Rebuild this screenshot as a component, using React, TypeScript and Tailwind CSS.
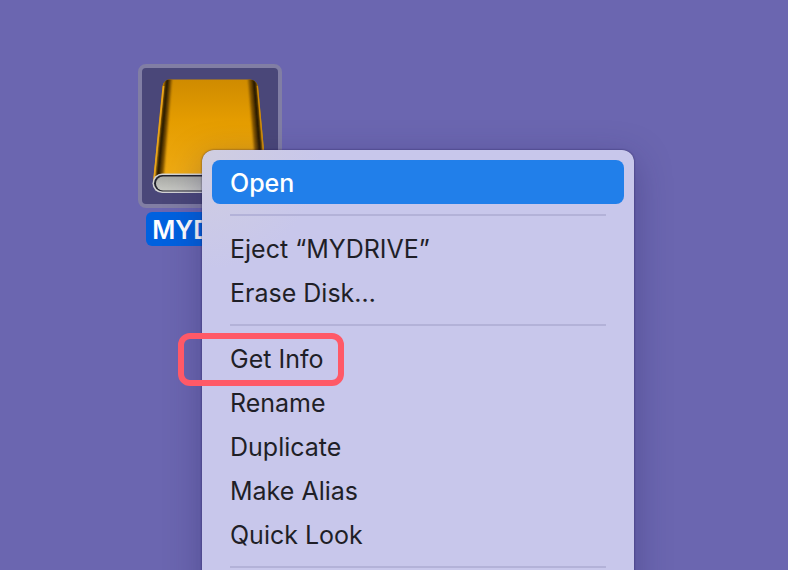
const menuGroups = [
  ['Open'],
  ['Eject “MYDRIVE”', 'Erase Disk…'],
  ['Get Info', 'Rename', 'Duplicate', 'Make Alias', 'Quick Look'],
];

const DriveArt = () => (
  <svg viewBox="0 0 136 136" className="block w-full" aria-hidden="true">
    <defs>
      <linearGradient id="cover" x1="0" y1="0" x2="0" y2="1">
        <stop offset="0" stopColor="#c98600" />
        <stop offset="0.45" stopColor="#e59d00" />
        <stop offset="1" stopColor="#f2ae18" />
      </linearGradient>
      <linearGradient id="cap" x1="0" y1="0" x2="0" y2="1">
        <stop offset="0" stopColor="#a9aaa6" />
        <stop offset="1" stopColor="#c6c7c2" />
      </linearGradient>
      <filter id="soft" x="-1" y="-0.1" width="3" height="1.2">
        <feGaussianBlur stdDeviation="0.9" />
      </filter>
      <clipPath id="body">
        <path d="M27 11.5H108Q114 12 116 18L125 114H11L20.500 18Q22 12 27 11.5Z" />
      </clipPath>
    </defs>
    <g clipPath="url(#body)">
      <rect width="136" height="120" fill="url(#cover)" />
      <g filter="url(#soft)">
        <path d="M23 8H30L21 114H13Z" fill="#7a4f00" />
        <path d="M23.500 10H27.500L18 112H13.500Z" fill="#2a1b00" />
        <path d="M106 8H114.500L123 114H115Z" fill="#7a4f00" />
        <path d="M109.500 10H114L122.500 112H118Z" fill="#2a1b00" />
      </g>
      <path d="M21.500 18L12 110" stroke="#e8a31d" strokeWidth="1.800" />
      <path d="M115.500 18L124 110" stroke="#d08c0a" strokeWidth="1.500" />
    </g>
    <rect x="10.500" y="105.500" width="116" height="19.500" rx="9.700" fill="#d3d3d4" />
    <rect x="12" y="107" width="113" height="16.500" rx="8.200" fill="#22232d" />
    <rect x="14" y="108.500" width="109.500" height="14" rx="7" fill="url(#cap)" />
  </svg>
);

const DriveIcon = () => (
  <div className="absolute left-[138px] top-16 flex w-36 flex-col items-center gap-1">
    <div className="w-full rounded-lg border-4 border-[#817ea4] bg-[#4a4779]">
      <DriveArt />
    </div>
    <span className="h-[34px] rounded-md bg-[#0061df] px-1.5 text-[25px] leading-9 font-semibold text-white">
      MYDRIVE
    </span>
  </div>
);

const MenuItem = ({ label }: { label: string }) => (
  <li role="none" className="relative">
    <button
      role="menuitem"
      className={
        label === 'Open'
          ? 'block h-11 w-full rounded-lg bg-[#217fea] px-[18px] text-left font-medium text-white'
          : 'block h-11 w-full rounded-lg px-[18px] text-left'
      }
    >
      <span className="block pt-0.5">{label}</span>
    </button>
    {label === 'Get Info' && (
      <span className="pointer-events-none absolute -top-[3px] -bottom-1.5 -left-[34px] w-[166px] rounded-xl border-6 border-[#ff5967]" />
    )}
  </li>
);

const ContextMenu = () => (
  <div
    role="menu"
    className="absolute left-[202px] top-[150px] w-[432px] rounded-xl bg-[#c8c7eb] bg-[radial-gradient(circle_at_top_left,#d0cee0,#c8c7eb_120px)] p-2.5 pb-10 text-[25px] leading-10 text-[#1f1f27] shadow-[0_0_2px_rgba(25,20,70,0.7),0_10px_36px_rgba(35,30,90,0.35)]"
  >
    {menuGroups.map((group) => (
      <div key={group[0]}>
        <ul role="group">
          {group.map((label) => (
            <MenuItem label={label} key={label} />
          ))}
        </ul>
        <hr className="mx-[18px] my-2.5 border-t-2 border-[#b3b2d8]" />
      </div>
    ))}
  </div>
);

export default function App() {
  return (
    <main className="relative h-screen overflow-hidden bg-[#6b66b0] font-[Inter,sans-serif]">
      <DriveIcon />
      <ContextMenu />
    </main>
  );
}
